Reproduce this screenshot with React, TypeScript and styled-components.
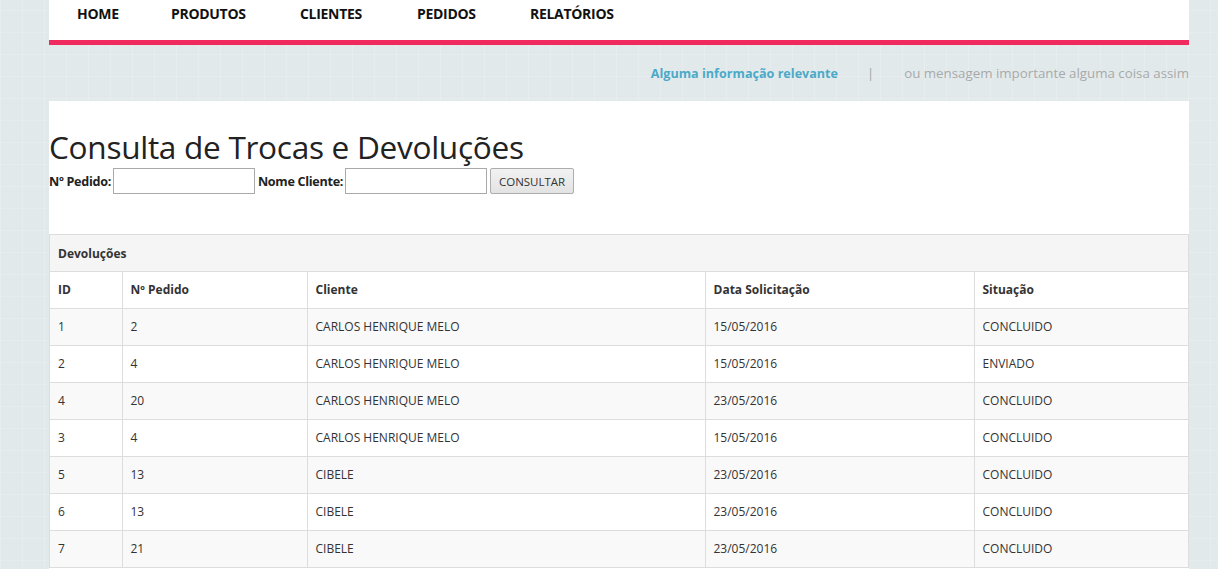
import React from "react";
import styled, { createGlobalStyle } from "styled-components";

const Global = createGlobalStyle`
  html, body { margin: 0; padding: 0; }
  body {
    font-family: "Open Sans", "Liberation Sans", sans-serif;
    color: #333;
    background-color: #e2e9eb;
    background-image:
      repeating-linear-gradient(90deg, rgba(255,255,255,0.18) 0 1px, transparent 1px 22px),
      repeating-linear-gradient(0deg, rgba(255,255,255,0.18) 0 1px, transparent 1px 22px);
  }
`;

const Container = styled.div`
  width: 1140px;
  margin-left: 49px;
`;

const Nav = styled.nav`
  background: #fff;
  height: 40px;
  border-bottom: 5px solid #f02a5e;
  display: flex;
  align-items: flex-start;
  padding-left: 28px;
  box-sizing: content-box;
`;

const NavItem = styled.a<{ $w: number }>`
  width: ${(p) => p.$w}px;
  font-size: 14px;
  font-weight: 700;
  color: #111;
  line-height: 28px;
  text-decoration: none;
  letter-spacing: -0.3px;
`;

const InfoBar = styled.div`
  height: 56px;
  display: flex;
  justify-content: flex-end;
  align-items: center;
`;

const InfoStrong = styled.span`
  color: #4ba9c8;
  font-weight: 700;
  font-size: 12.6px;
`;

const Sep = styled.span`
  color: #9aa5a8;
  font-size: 13px;
  margin: 0 30px 0 29px;
`;

const InfoMuted = styled.span`
  color: #a7a9aa;
  font-size: 13.3px;
`;

const Content = styled.main`
  background: #fff;
  padding-top: 26px;
  min-height: 500px;
`;

const Title = styled.h1`
  margin: 0;
  font-size: 31.6px;
  font-weight: 400;
  color: #222;
  line-height: 40px;
  letter-spacing: -0.3px;
`;

const Form = styled.form`
  display: flex;
  align-items: center;
  height: 28px;
  font-size: 12.6px;
  font-weight: 700;
  color: #222;
`;

const Label = styled.label`
  margin-right: 2px;
  letter-spacing: -0.3px;
`;

const Input = styled.input`
  width: 142px;
  height: 26px;
  box-sizing: border-box;
  border: 1px solid #a9a9a9;
  margin-right: 3px;
  padding: 0 4px;
`;

const Button = styled.button`
  height: 26px;
  width: 84px;
  border: 1px solid #adadad;
  border-radius: 2px;
  background: linear-gradient(#f2f2f2, #e3e3e3);
  font-family: "Open Sans", sans-serif;
  font-size: 11.5px;
  color: #333;
  padding: 0;
`;

const Panel = styled.section`
  margin-top: 39px;
  border: 1px solid #ddd;
  border-bottom: none;
`;

const PanelHeading = styled.div`
  background: #f5f5f5;
  height: 36px;
  border-bottom: 1px solid #ddd;
  display: flex;
  align-items: center;
  padding-left: 8px;
  font-size: 12px;
  font-weight: 700;
  color: #333;
`;

const Table = styled.table`
  width: 100%;
  border-collapse: collapse;
  font-size: 12px;
`;

const Row = styled.tr<{ $striped?: boolean }>`
  background: ${(p) => (p.$striped ? "#f9f9f9" : "#fff")};
`;

const Th = styled.th<{ $w?: number }>`
  text-align: left;
  font-weight: 700;
  height: 36px;
  padding: 0 8px;
  border-right: 1px solid #ddd;
  border-bottom: 1px solid #ddd;
  width: ${(p) => (p.$w ? `${p.$w}px` : "auto")};
  box-sizing: border-box;
  &:last-child { border-right: none; }
`;

const Td = styled.td`
  height: 36px;
  padding: 0 8px;
  border-right: 1px solid #ddd;
  border-bottom: 1px solid #ddd;
  color: #333;
  &:last-child { border-right: none; }
`;

const rows = [
  ["1", "2", "CARLOS HENRIQUE MELO", "15/05/2016", "CONCLUIDO"],
  ["2", "4", "CARLOS HENRIQUE MELO", "15/05/2016", "ENVIADO"],
  ["4", "20", "CARLOS HENRIQUE MELO", "23/05/2016", "CONCLUIDO"],
  ["3", "4", "CARLOS HENRIQUE MELO", "15/05/2016", "CONCLUIDO"],
  ["5", "13", "CIBELE", "23/05/2016", "CONCLUIDO"],
  ["6", "13", "CIBELE", "23/05/2016", "CONCLUIDO"],
  ["7", "21", "CIBELE", "23/05/2016", "CONCLUIDO"],
];

export default function App() {
  return (
    <>
      <Global />
      <Container>
        <Nav>
          <NavItem $w={94}>HOME</NavItem>
          <NavItem $w={129}>PRODUTOS</NavItem>
          <NavItem $w={117}>CLIENTES</NavItem>
          <NavItem $w={113}>PEDIDOS</NavItem>
          <NavItem $w={100}>RELATÓRIOS</NavItem>
        </Nav>
        <InfoBar>
          <InfoStrong>Alguma informação relevante</InfoStrong>
          <Sep>|</Sep>
          <InfoMuted>ou mensagem importante alguma coisa assim</InfoMuted>
        </InfoBar>
        <Content>
          <Title>Consulta de Trocas e Devoluções</Title>
          <Form onSubmit={(e) => e.preventDefault()}>
            <Label>Nº Pedido:</Label>
            <Input />
            <Label>Nome Cliente:</Label>
            <Input />
            <Button type="submit">CONSULTAR</Button>
          </Form>
          <Panel>
            <PanelHeading>Devoluções</PanelHeading>
            <Table>
              <thead>
                <Row>
                  <Th $w={72}>ID</Th>
                  <Th $w={185}>Nº Pedido</Th>
                  <Th $w={398}>Cliente</Th>
                  <Th $w={269}>Data Solicitação</Th>
                  <Th>Situação</Th>
                </Row>
              </thead>
              <tbody>
                {rows.map((r, i) => (
                  <Row key={i} $striped={i % 2 === 0}>
                    {r.map((c, j) => (
                      <Td key={j}>{c}</Td>
                    ))}
                  </Row>
                ))}
              </tbody>
            </Table>
          </Panel>
        </Content>
      </Container>
    </>
  );
}
